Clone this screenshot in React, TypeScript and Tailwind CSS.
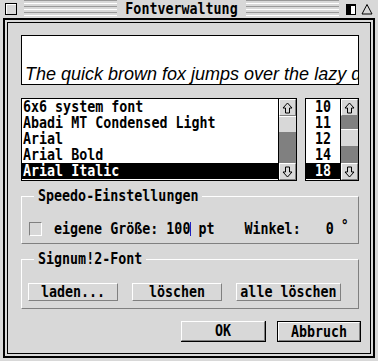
import React from "react";

const mono = "font-['DejaVu_Sans_Mono','Liberation_Mono',monospace] font-bold text-[13.33px] leading-[16px]";

function Sys({ children }: { children: React.ReactNode }) {
  return <span className="inline-block scale-y-[1.15] whitespace-pre">{children}</span>;
}

function Arrow({ down = false }: { down?: boolean }) {
  return (
    <svg width="11" height="12" viewBox="0 0 11 12" className={down ? "rotate-180" : ""}>
      <path d="M5.5 1 L10 6 H7.5 V11 H3.5 V6 H1 Z" fill="none" stroke="#000" strokeWidth="1" />
    </svg>
  );
}

function ArrowBox({ down = false }: { down?: boolean }) {
  return (
    <div className="h-[17px] flex items-center justify-center bg-[#d8d8d8] border-t border-l border-white border-r border-b border-r-[#808080] border-b-[#808080]">
      <Arrow down={down} />
    </div>
  );
}

function Stripes() {
  return (
    <div className="flex-1 flex flex-col gap-[2px] justify-center">
      <div className="h-px bg-[#999]" />
      <div className="h-px bg-white" />
      <div className="h-px bg-[#999]" />
      <div className="h-px bg-white" />
      <div className="h-px bg-[#999]" />
      <div className="h-px bg-white" />
      <div className="h-px bg-[#999]" />
    </div>
  );
}

function Btn({ label, w, strong = false }: { label: string; w: string; strong?: boolean }) {
  return (
    <div className={`${w} h-full ${strong ? "border border-black" : "border-r border-b border-black"}`}>
      <div className="h-full flex items-center justify-center bg-[#d8d8d8] border-t border-l border-white border-r border-b border-r-[#808080] border-b-[#808080]">
        <Sys>{label}</Sys>
      </div>
    </div>
  );
}

function SmallBtn({ label, w }: { label: string; w: string }) {
  return (
    <div className={`${w} h-full flex items-center justify-center border-t border-l border-white border-r border-b border-r-[#808080] border-b-[#808080]`}>
      <Sys>{label}</Sys>
    </div>
  );
}

export default function App() {
  const fonts = ["6x6 system font", "Abadi MT Condensed Light", "Arial", "Arial Bold", "Arial Italic"];
  const sizes = ["10", "11", "12", "14", "18"];

  return (
    <div className={`w-[378px] h-[361px] bg-[#d8d8d8] flex flex-col text-black ${mono}`}>
      {/* title bar */}
      <div className="h-[18px] flex items-center px-[5px] gap-[7px]">
        <div className="w-[12px] h-[12px] border border-black bg-[#d8d8d8] shadow-[inset_1px_1px_0_#fff]" />
        <Stripes />
        <div className="px-[1px]">
          <Sys>Fontverwaltung</Sys>
        </div>
        <Stripes />
        <div className="flex items-center gap-[5px]">
          <div className="w-[10px] h-[11px] bg-black relative">
            <div className="absolute left-[5px] top-[2px] w-[4px] h-[8px] bg-white" />
          </div>
          <svg width="12" height="12" viewBox="0 0 12 12">
            <path d="M6 1.5 L11 11 H1 Z" fill="none" stroke="#000" strokeWidth="1" />
          </svg>
        </div>
      </div>

      {/* window frame */}
      <div className="mx-[3px] h-[340px] border-2 border-black p-[2px]">
        <div className="h-full border border-black flex flex-col">
          {/* preview */}
          <div className="ml-[13px] mt-[12px] w-[338px] h-[50px] bg-white border border-black flex items-end pl-[3px] overflow-hidden">
            <span className="font-['Liberation_Sans',Arial,sans-serif] italic font-normal text-[18px] leading-[19px] whitespace-nowrap">
              The quick brown fox jumps over the lazy d
            </span>
          </div>

          {/* lists */}
          <div className="ml-[13px] mt-[13px] w-[338px] h-[83px] flex gap-[8px]">
            <div className="w-[276px] border border-black flex bg-white">
              <div className="flex-1 flex flex-col">
                {fonts.map((f, i) => (
                  <div key={f} className={`h-[16px] pl-[1px] ${i === 4 ? "bg-black text-white" : ""}`}>
                    <Sys>{f}</Sys>
                  </div>
                ))}
              </div>
              <div className="w-[18px] border-l border-black flex flex-col">
                <ArrowBox />
                <div className="h-[16px] bg-[#d8d8d8] border-t border-white" />
                <div className="flex-1 bg-[#808080]" />
                <ArrowBox down />
              </div>
            </div>
            <div className="flex-1 border border-black flex bg-white">
              <div className="flex-1 flex flex-col">
                {sizes.map((s, i) => (
                  <div key={s} className={`h-[16px] text-center ${i === 4 ? "bg-black text-white" : ""}`}>
                    <Sys>{s}</Sys>
                  </div>
                ))}
              </div>
              <div className="w-[18px] border-l border-black flex flex-col">
                <ArrowBox />
                <div className="h-[13px] bg-[#808080]" />
                <div className="h-[17px] bg-[#d8d8d8] border-t border-white" />
                <div className="flex-1 bg-[#808080]" />
                <ArrowBox down />
              </div>
            </div>
          </div>

          {/* Speedo group */}
          <div className="relative ml-[13px] mt-[15px] w-[338px] h-[48px] border-t border-l border-white border-r border-b border-r-[#808080] border-b-[#808080]">
            <div className="absolute -top-[9px] left-[12px] px-[4px] bg-[#d8d8d8]">
              <Sys>Speedo-Einstellungen</Sys>
            </div>
            <div className="mt-[24px] ml-[7px] flex items-center">
              <div className="w-[13px] h-[14px] border-t border-l border-[#808080] border-r border-b border-r-white border-b-white" />
              <div className="ml-[12px]">
                <Sys>eigene Größe: 100</Sys>
              </div>
              <div className="w-px h-[14px] bg-[#2020c0]" />
              <div className="ml-[7px]">
                <Sys>pt</Sys>
              </div>
              <div className="ml-[30px]">
                <Sys>Winkel:</Sys>
              </div>
              <div className="ml-[25px]">
                <Sys>0</Sys>
              </div>
              <div className="ml-[7px] -mt-[6px]">
                <Sys>°</Sys>
              </div>
            </div>
          </div>

          {/* Signum group */}
          <div className="relative ml-[13px] mt-[15px] w-[338px] h-[50px] border-t border-l border-white border-r border-b border-r-[#808080] border-b-[#808080]">
            <div className="absolute -top-[9px] left-[12px] px-[4px] bg-[#d8d8d8]">
              <Sys>Signum!2-Font</Sys>
            </div>
            <div className="mt-[23px] ml-[6px] h-[18px] flex gap-[14px]">
              <SmallBtn label="laden..." w="w-[90px]" />
              <SmallBtn label="löschen" w="w-[90px]" />
              <SmallBtn label="alle löschen" w="w-[105px]" />
            </div>
          </div>

          {/* bottom buttons */}
          <div className="mt-[12px] h-[21px] flex justify-end gap-[11px] pr-[9px]">
            <Btn label="OK" w="w-[85px]" />
            <Btn label="Abbruch" w="w-[84px]" strong />
          </div>
        </div>
      </div>
    </div>
  );
}
